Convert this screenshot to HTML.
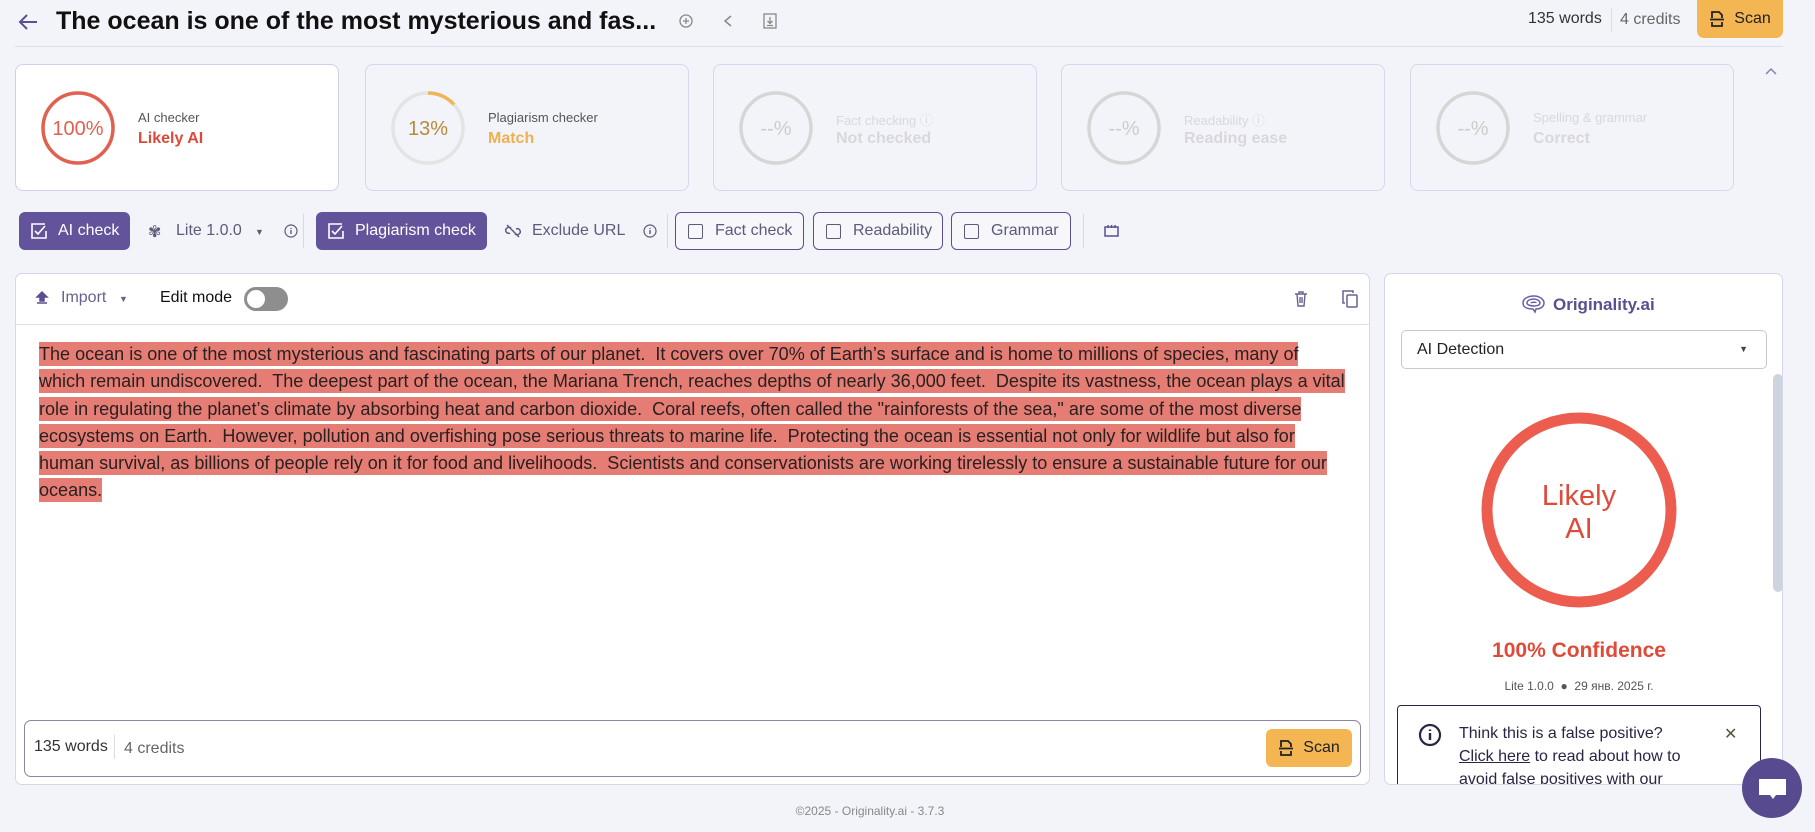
<!DOCTYPE html>
<html><head><meta charset="utf-8"><style>
*{box-sizing:border-box;margin:0;padding:0}
body{width:1815px;height:832px;background:#f3f4f9;font-family:"Liberation Sans",Arial,sans-serif;position:relative;overflow:hidden;color:#222}
.abs{position:absolute}
.card{position:absolute;top:64px;width:324px;height:127px;border:1px solid #d6d6ec;border-radius:8px;background:#f3f4f9}
.card .ring{position:absolute;left:24px;top:25px}
.card .t1{position:absolute;left:122px;top:45px;font-size:13px;color:#555}
.card .t2{position:absolute;left:122px;top:65px;font-size:16px;font-weight:bold}
.dis .t1,.dis .t2{color:#d8d8dc}
.btn{position:absolute;top:212px;height:38px;border-radius:6px;display:flex;align-items:center;font-size:16px;color:#5b5b7a}
.btn.on{background:#63539a;color:#fff}
.btn.out{border:1.5px solid #5c4f8f;background:#f6f6fb}
.sep{position:absolute;top:214px;width:1px;height:34px;background:#d8d8e4}
.cb{display:inline-block;width:15px;height:15px;border:1.7px solid currentColor;border-radius:2px;margin:0 12px 0 12px}
.ck{margin:0 11px 0 12px}
.txt{position:absolute;left:39px;top:341px;font-size:18.05px;line-height:27.3px;color:#2a2020}
.txt span{background:#e57d74;padding:2px 0}
</style></head><body>
<svg class="abs" style="left:17px;top:12px" width="22" height="20" viewBox="0 0 22 20"><path d="M20 10H3M10 3L3 10l7 7" stroke="#5c4f8f" stroke-width="2" fill="none"/></svg>
<div class="abs" style="left:56px;top:7px;font-size:25px;font-weight:bold;color:#111">The ocean is one of the most mysterious and fas...</div>
<svg class="abs" style="left:679px;top:14px" width="14" height="14" viewBox="0 0 14 14"><circle cx="7" cy="7" r="6" stroke="#888" fill="none" stroke-width="1.3"/><path d="M7 4v6M4 7h6" stroke="#888" stroke-width="1.3"/></svg>
<svg class="abs" style="left:721px;top:14px" width="14" height="14" viewBox="0 0 14 14"><path d="M10 2L4 7l6 5" stroke="#888" fill="none" stroke-width="1.5"/></svg>
<svg class="abs" style="left:763px;top:13px" width="14" height="16" viewBox="0 0 14 16"><rect x="1" y="1" width="12" height="14" stroke="#888" fill="none" stroke-width="1.3"/><path d="M7 4v6M4.5 8L7 10.5 9.5 8M4 12.5h6" stroke="#888" fill="none" stroke-width="1.3"/></svg>
<div class="abs" style="left:1528px;top:10px;font-size:16px;color:#333">135 words</div>
<div class="abs" style="left:1611px;top:8px;width:1px;height:24px;background:#ddd"></div>
<div class="abs" style="left:1620px;top:11px;font-size:16px;color:#666">4 credits</div>
<div class="abs" style="left:1697px;top:0;width:86px;height:38px;background:#f4b553;border-radius:0 0 7px 7px;display:flex;align-items:center;justify-content:center;font-size:16px;color:#222"><svg width="16" height="18" viewBox="0 0 16 18" style="margin-right:9px"><path d="M3 8V2h7l3 3v3M1 9.5h14M3 12v4h10v-4" stroke="#222" fill="none" stroke-width="1.8"/></svg>Scan</div>
<div class="abs" style="left:15px;top:46px;width:1768px;height:1px;background:#dcdcec"></div>
<div class="card" style="left:15px;background:#fff;border-color:#d0d0e6">
 <svg class="ring" width="76" height="76"><circle cx="38" cy="38" r="35" stroke="#e2604f" stroke-width="3.5" fill="none"/><text x="38" y="45" font-size="20" fill="#e2604f" text-anchor="middle" font-family="Liberation Sans">100%</text></svg>
 <div class="t1">AI checker</div><div class="t2" style="color:#db4a38">Likely AI</div></div>
<div class="card" style="left:365px">
 <svg class="ring" width="76" height="76"><circle cx="38" cy="38" r="35" stroke="#e4e4e4" stroke-width="3.5" fill="none"/><path d="M38 3 A35 35 0 0 1 64 14.5" stroke="#f0b558" stroke-width="3.5" fill="none"/><text x="38" y="45" font-size="20" fill="#b88a3a" text-anchor="middle" font-family="Liberation Sans">13%</text></svg>
 <div class="t1">Plagiarism checker</div><div class="t2" style="color:#f0b04e">Match</div></div>
<div class="card dis" style="left:713px">
 <svg class="ring" width="76" height="76"><circle cx="38" cy="38" r="35" stroke="#d6d6d6" stroke-width="3.5" fill="none"/><text x="38" y="45" font-size="20" fill="#ccc" text-anchor="middle" font-family="Liberation Sans">--%</text></svg>
 <div class="t1">Fact checking ⓘ</div><div class="t2">Not checked</div></div>
<div class="card dis" style="left:1061px">
 <svg class="ring" width="76" height="76"><circle cx="38" cy="38" r="35" stroke="#d6d6d6" stroke-width="3.5" fill="none"/><text x="38" y="45" font-size="20" fill="#ccc" text-anchor="middle" font-family="Liberation Sans">--%</text></svg>
 <div class="t1">Readability ⓘ</div><div class="t2">Reading ease</div></div>
<div class="card dis" style="left:1410px">
 <svg class="ring" width="76" height="76"><circle cx="38" cy="38" r="35" stroke="#d6d6d6" stroke-width="3.5" fill="none"/><text x="38" y="45" font-size="20" fill="#ccc" text-anchor="middle" font-family="Liberation Sans">--%</text></svg>
 <div class="t1">Spelling &amp; grammar</div><div class="t2">Correct</div></div>
<svg class="abs" style="left:1764px;top:66px" width="14" height="10" viewBox="0 0 14 10"><path d="M2 8l5-5 5 5" stroke="#8a80b0" fill="none" stroke-width="1.5"/></svg>
<div class="btn on" style="left:19px;width:111px"><svg class="ck" width="16" height="16" viewBox="0 0 16 16"><path d="M14 1H1v14h14V8" stroke="#fff" fill="none" stroke-width="1.6"/><path d="M4 8l3 3 7-8" stroke="#fff" fill="none" stroke-width="1.6"/></svg>AI check</div>
<div class="abs" style="left:148px;top:222px;font-size:16px;color:#5b5b7a">✾</div>
<div class="abs" style="left:176px;top:222px;font-size:16px;color:#5b5b7a">Lite 1.0.0</div>
<div class="abs" style="left:255px;top:227px;font-size:9px;color:#5b5b7a">▼</div>
<svg class="abs" style="left:284px;top:224px" width="14" height="14"><circle cx="7" cy="7" r="6" stroke="#5b5b7a" fill="none" stroke-width="1.2"/><path d="M7 6v4M7 4v1" stroke="#5b5b7a" stroke-width="1.4"/></svg>
<div class="sep" style="left:303px"></div>
<div class="btn on" style="left:316px;width:171px"><svg class="ck" width="16" height="16" viewBox="0 0 16 16"><path d="M14 1H1v14h14V8" stroke="#fff" fill="none" stroke-width="1.6"/><path d="M4 8l3 3 7-8" stroke="#fff" fill="none" stroke-width="1.6"/></svg>Plagiarism check</div>
<svg class="abs" style="left:504px;top:223px" width="18" height="16" viewBox="0 0 18 16"><path d="M7 5a3 3 0 0 0-4 0L2 6a3 3 0 0 0 4 4M11 11a3 3 0 0 0 4 0l1-1a3 3 0 0 0-4-4M3 2l12 12" stroke="#5b5b7a" fill="none" stroke-width="1.5"/></svg>
<div class="abs" style="left:532px;top:222px;font-size:16px;color:#5b5b7a">Exclude URL</div>
<svg class="abs" style="left:643px;top:224px" width="14" height="14"><circle cx="7" cy="7" r="6" stroke="#5b5b7a" fill="none" stroke-width="1.2"/><path d="M7 6v4M7 4v1" stroke="#5b5b7a" stroke-width="1.4"/></svg>
<div class="sep" style="left:667px"></div>
<div class="btn out" style="left:675px;width:129px"><span class="cb" style="margin-right:12px"></span>Fact check</div>
<div class="btn out" style="left:813px;width:130px"><span class="cb" style="margin-right:12px"></span>Readability</div>
<div class="btn out" style="left:951px;width:120px"><span class="cb" style="margin-right:12px"></span>Grammar</div>
<div class="sep" style="left:1083px"></div>
<svg class="abs" style="left:1104px;top:224px" width="15" height="14" viewBox="0 0 15 14"><rect x="1" y="3" width="13" height="9" stroke="#5b4f8f" fill="none" stroke-width="1.5"/><path d="M4 1v3M7.5 1v3M11 1v3" stroke="#5b4f8f" stroke-width="1.5"/></svg>
<div class="abs" style="left:15px;top:273px;width:1355px;height:512px;background:#fff;border:1px solid #d6d6ea;border-radius:7px"></div>
<div class="abs" style="left:15px;top:324px;width:1355px;height:1px;background:#dedeec"></div>
<svg class="abs" style="left:34px;top:290px" width="16" height="16" viewBox="0 0 16 16"><path d="M8 2L3 7h3v4h4V7h3zM3 13h10" stroke="#5c4f8f" fill="#5c4f8f" stroke-width="1.5"/></svg>
<div class="abs" style="left:61px;top:289px;font-size:16px;color:#6a6090">Import</div>
<div class="abs" style="left:119px;top:294px;font-size:9px;color:#6a6090">▼</div>
<div class="abs" style="left:160px;top:289px;font-size:16px;color:#111">Edit mode</div>
<div class="abs" style="left:244px;top:287px;width:44px;height:24px;border-radius:12px;background:#8e8e8e"><div style="position:absolute;left:3px;top:3px;width:18px;height:18px;border-radius:50%;background:#fff"></div></div>
<svg class="abs" style="left:1294px;top:291px" width="14" height="16" viewBox="0 0 14 16"><path d="M1 3h12M5 3V1h4v2M3 3l1 12h6l1-12M6 6v6M8 6v6" stroke="#6a6090" fill="none" stroke-width="1.4"/></svg>
<svg class="abs" style="left:1342px;top:290px" width="16" height="18" viewBox="0 0 16 18"><rect x="5" y="5" width="10" height="12" rx="1" stroke="#6a6090" fill="none" stroke-width="1.5"/><path d="M3 13H1V1h10v2" stroke="#6a6090" fill="none" stroke-width="1.5"/></svg>
<div class="txt">
<span>The ocean is one of the most mysterious and fascinating parts of our planet.&nbsp; It covers over 70% of Earth’s surface and is home to millions of species, many of</span><br>
<span>which remain undiscovered.&nbsp; The deepest part of the ocean, the Mariana Trench, reaches depths of nearly 36,000 feet.&nbsp; Despite its vastness, the ocean plays a vital</span><br>
<span>role in regulating the planet’s climate by absorbing heat and carbon dioxide.&nbsp; Coral reefs, often called the "rainforests of the sea," are some of the most diverse</span><br>
<span>ecosystems on Earth.&nbsp; However, pollution and overfishing pose serious threats to marine life.&nbsp; Protecting the ocean is essential not only for wildlife but also for</span><br>
<span>human survival, as billions of people rely on it for food and livelihoods.&nbsp; Scientists and conservationists are working tirelessly to ensure a sustainable future for our</span><br>
<span>oceans.</span></div>
<div class="abs" style="left:24px;top:720px;width:1337px;height:57px;border:1px solid #8a86a0;border-radius:7px;background:#fff"></div>
<div class="abs" style="left:34px;top:738px;font-size:16px;color:#333">135 words</div>
<div class="abs" style="left:114px;top:735px;width:1px;height:24px;background:#ddd"></div>
<div class="abs" style="left:124px;top:740px;font-size:16px;color:#666">4 credits</div>
<div class="abs" style="left:1266px;top:729px;width:86px;height:38px;background:#f4b553;border-radius:6px;display:flex;align-items:center;justify-content:center;font-size:16px;color:#222"><svg width="16" height="18" viewBox="0 0 16 18" style="margin-right:9px"><path d="M3 8V2h7l3 3v3M1 9.5h14M3 12v4h10v-4" stroke="#222" fill="none" stroke-width="1.8"/></svg>Scan</div>
<div class="abs" style="left:0;top:804px;width:1740px;text-align:center;font-size:12px;color:#888">©2025 - Originality.ai - 3.7.3</div>
<div class="abs" style="left:1384px;top:273px;width:399px;height:512px;background:#fff;border:1px solid #d6d6ea;border-radius:7px;overflow:hidden">
 <svg style="position:absolute;left:135px;top:20px" width="26" height="20" viewBox="0 0 26 20"><path d="M3 9c0-5 6-7 11-7s10 3 10 7-4 6-8 6l-1 3-2-3C7 15 3 13 3 9zM7 9c0-3 4-4 7-4s6 2 6 4-3 3-6 3-7-1-7-3zM11 9c1-1 5-1 5 0" stroke="#6b5ea6" fill="none" stroke-width="1.5"/></svg>
 <div style="position:absolute;left:168px;top:21px;font-size:17px;font-weight:bold;color:#5b4f8f">Originality.ai</div>
 <div style="position:absolute;left:16px;top:56px;width:366px;height:39px;border:1px solid #c8c8d4;border-radius:5px;font-size:16px;color:#222;padding:10px 15px">AI Detection<span style="position:absolute;right:18px;top:13px;font-size:9px;color:#444">▼</span></div>
 <div style="position:absolute;left:388px;top:100px;width:10px;height:218px;border-radius:5px;background:#cdd4de"></div>
 <svg style="position:absolute;left:84px;top:126px" width="220" height="220"><circle cx="110" cy="110" r="92" stroke="#ec5d4f" stroke-width="11" fill="none"/><text x="110" y="105" font-size="29" fill="#e04a38" text-anchor="middle" font-family="Liberation Sans">Likely</text><text x="110" y="138" font-size="29" fill="#e04a38" text-anchor="middle" font-family="Liberation Sans">AI</text></svg>
 <div style="position:absolute;left:0;width:388px;top:365px;text-align:center;font-size:21px;font-weight:bold;color:#e04a38">100% Confidence</div>
 <div style="position:absolute;left:0;width:388px;top:405px;text-align:center;font-size:12px;color:#555">Lite 1.0.0 &nbsp;●&nbsp; 29 янв. 2025 г.</div>
 <div style="position:absolute;left:12px;top:431px;width:364px;height:100px;border:1.5px solid #2b2444;border-radius:4px">
  <svg style="position:absolute;left:20px;top:17px" width="24" height="24"><circle cx="12" cy="12" r="10" stroke="#2b2444" stroke-width="2.2" fill="none"/><path d="M12 10v7M12 6.5v1.5" stroke="#2b2444" stroke-width="2.4"/></svg>
  <div style="position:absolute;left:61px;top:16px;font-size:16px;line-height:23px;color:#2b2444">Think this is a false positive?<br><u>Click here</u> to read about how to<br>avoid false positives with our</div>
  <div style="position:absolute;left:326px;top:18px;font-size:16px;color:#554">✕</div>
 </div>
</div>
<div class="abs" style="left:1742px;top:758px;width:60px;height:60px;border-radius:50%;background:#574a8e"><svg style="position:absolute;left:16px;top:19px" width="29" height="24" viewBox="0 0 29 24"><path d="M1 2h27v16H18l-3 4-3-4H1z" fill="#fff"/></svg></div>
</body></html>
